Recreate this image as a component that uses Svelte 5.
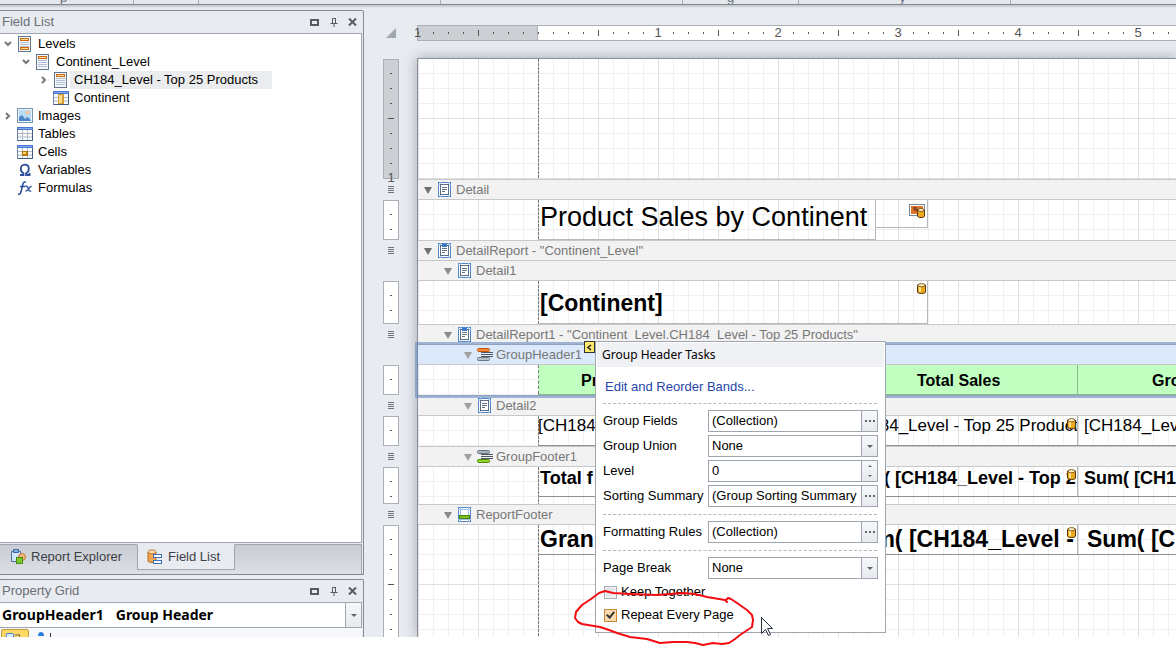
<script lang="ts">
  type TreeNode = {
    label: string;
    icon: string;
    depth: number;
    arrow?: 'open' | 'closed';
  };

  type Band = {
    id: string;
    title: string;
    icon: string;
    depth: number;
    height: number;
    marker: boolean;
  };

  const TREE_INDENT_PX = 18;
  const BAND_INDENT_PX = 20;

  const tree: TreeNode[] = [
    { label: 'Levels', icon: 'levels', depth: 0, arrow: 'open' },
    { label: 'Continent_Level', icon: 'level', depth: 1, arrow: 'open' },
    { label: 'CH184_Level - Top 25 Products', icon: 'level', depth: 2, arrow: 'closed' },
    { label: 'Continent', icon: 'column', depth: 2 },
    { label: 'Images', icon: 'image', depth: 0, arrow: 'closed' },
    { label: 'Tables', icon: 'table', depth: 0 },
    { label: 'Cells', icon: 'cell', depth: 0 },
    { label: 'Variables', icon: 'omega', depth: 0 },
    { label: 'Formulas', icon: 'fx', depth: 0 }
  ];

  // A height of 0 means the band has a caption only, -1 means it takes the rest.
  const bands: Band[] = [
    { id: 'detail', title: 'Detail', icon: 'band', depth: 0, height: 41, marker: true },
    { id: 'report', title: 'DetailReport - "Continent_Level"', icon: 'report', depth: 0, height: 0, marker: true },
    { id: 'detail1', title: 'Detail1', icon: 'band', depth: 1, height: 44, marker: false },
    { id: 'report1', title: 'DetailReport1 - "Continent_Level.CH184_Level - Top 25 Products"', icon: 'report', depth: 1, height: 0, marker: true },
    { id: 'header1', title: 'GroupHeader1', icon: 'groupheader', depth: 2, height: 31, marker: false },
    { id: 'detail2', title: 'Detail2', icon: 'band', depth: 2, height: 31, marker: true },
    { id: 'footer1', title: 'GroupFooter1', icon: 'groupfooter', depth: 2, height: 38, marker: true },
    { id: 'footer', title: 'ReportFooter', icon: 'footer', depth: 1, height: -1, marker: true }
  ];

  const rows: Record<string, string[]> = {
    header1: ['Pr', 'Total Sales', 'Gro'],
    detail2: ['[CH184_', '[CH184_Level - Top 25 Product', '[CH184_Lev'],
    footer1: ['Total f', 'Sum( [CH184_Level - Top 2', 'Sum( [CH1'],
    footer: ['Gran', 'Sum( [CH184_Level -', 'Sum( [C']
  };

  const inches = ['', '1', '2', '3', '4', '5'];

  let selectedNode = 'CH184_Level - Top 25 Products';
  let selectedBand = 'header1';
  let activeTab = 'Field List';
  let level = 0;
  let keepTogether = false;
  let repeatEveryPage = true;
</script>

{#snippet icon(name: string)}
  <svg class="icon" width="16" height="16" viewBox="0 0 16 16" fill="none" aria-hidden="true">
    {#if name === 'levels' || name === 'level'}
      <rect x="1.5" y=".5" width="12" height="15" fill="#f4f7fb" stroke="#64788f" />
      <rect x="3.5" y="2.5" width="8" height="2" fill="#ffe0a0" stroke="#d0690c" />
      <path d="M3 6.5h9M3 8.5h9M3 10.5h9" stroke="#b4bfd2" />
      {#if name === 'levels'}
        <rect x="3.5" y="11.5" width="8" height="2" fill="#ffe0a0" stroke="#d0690c" />
      {:else}
        <path d="M3 12.5h9" stroke="#b4bfd2" />
      {/if}
    {:else if name === 'table' || name === 'cell' || name === 'column'}
      <rect x=".5" y="1.5" width="15" height="13" fill="#fbfcfe" stroke="#6d83a8" />
      <path d="M0 1h16v3H0z" fill="#4876d4" />
      <path d="M1 2.5h14" stroke="#86a9ee" />
      <path d="M5.5 4v10M10.5 4v10M1 7.5h14M1 11h14" stroke="#adb8ca" />
      <path d="M.5 14.5h15V4" stroke="#445e82" />
      {#if name === 'cell'}
        <path d="M5 7h6v5H5z" fill="#b8770f" /><path d="M6 8h3v2H6z" fill="#ffd86b" />
      {:else if name === 'column'}
        <path d="M5 4h6v10H5z" fill="#d69b32" /><path d="M6 5h3v8H6z" fill="#f7dc92" />
      {/if}
    {:else if name === 'image'}
      <rect x=".5" y=".5" width="15" height="14" fill="#eaf3fc" stroke="#7b94b2" />
      <path d="M2 2h12v11H2z" fill="#b9dcf7" />
      <circle cx="10.5" cy="4.5" r="2" fill="#f7c79b" />
      <path d="M2 13V9l3-2 3 4 2-2 2 1 2 3z" fill="#4d86c5" />
    {:else if name === 'omega'}
      <path d="M3 13h3.5v-1.700C4.500 10.300 3.800 8.700 3.800 7c0-2.500 1.600-4.300 4-4.300s4 1.800 4 4.300c0 1.700-.7 3.300-2.700 4.300V13h3.500v-2" stroke="#2b4f9c" stroke-width="1.800" />
    {:else if name === 'fx'}
      <path d="M1 14c2 .7 2.700-.6 3.200-3L6 3.800C6.500 2 7.500 1.500 9 2.200M3 6.500h5.500" stroke="#2b4f9c" stroke-width="1.500" />
      <path d="M8.500 6.500c2-.8 2.300.5 2.700 2.200.5 2 1 3 3 2.200M14.700 6.500c-2.200-.6-3.300 4.800-6.200 4.500" stroke="#2b4f9c" stroke-width="1.300" />
    {:else if name === 'band' || name === 'report' || name === 'footer'}
      <rect x=".5" y=".5" width="12" height="14" fill="#fff" stroke="#5087c7" />
      <path d="M2.500 0v15M10.500 0v15M0 2.500h13" stroke="#9cbfe6" />
      {#if name === 'footer'}
        <path d="M0 12.500h13" stroke="#9cbfe6" />
        <rect x="1.500" y="8.500" width="10" height="3" fill="#7fbf22" stroke="#4a8a0a" />
      {:else}
        <rect x="2.500" y="2.500" width="8" height="10" fill="#fff" stroke="#5c6f85" />
        <path d="M4 5.500h5M4 7.500h5M4 9.500h3" stroke="#66727f" />
        {#if name === 'report'}
          <path d="M4 1h5v3H4z" fill="#3975c9" />
        {/if}
      {/if}
    {:else if name === 'groupheader' || name === 'groupfooter'}
      <path d="M3 5.500h12M3 7.500h12M3 9.500h12" stroke="#4d5864" />
      <rect x="-.5" y="1.500" width="12" height="3" rx="1" fill={name === 'groupheader' ? '#f08a35' : '#aab3bf'} stroke={name === 'groupheader' ? '#c4560c' : '#6b7683'} />
      <rect x="-.5" y="10.500" width="12" height="3" rx="1" fill={name === 'groupfooter' ? '#93cf25' : '#b8c0ca'} stroke={name === 'groupfooter' ? '#4a8a0a' : '#6b7683'} />
    {:else if name === 'explorer'}
      <path d="M1.500 2.500h9v10h-9z" fill="#d4e4f7" stroke="#4b6f9f" />
      <path d="M3.500.5h5v3h-5z" fill="#84b1e6" stroke="#41659a" />
      <circle cx="12" cy="8" r="3.500" fill="#f4b67a" stroke="#c57e3e" />
      <rect x="6.500" y="8.500" width="6" height="6" fill="#7cc52b" stroke="#478b10" />
    {:else if name === 'fields'}
      <path d="M1 3v9c0 2 8 2 8 0V3z" fill="#efa552" stroke="#b86b1f" />
      <ellipse cx="5" cy="2.800" rx="4" ry="1.800" fill="#fde4bd" stroke="#c57c31" />
      <rect x="6.500" y="5.500" width="8" height="3" fill="#fff" stroke="#3b70b8" />
      <rect x="6.500" y="11.500" width="8" height="3" fill="#fff" stroke="#3b70b8" />
    {/if}
  </svg>
{/snippet}

{#snippet cylinder()}
  <svg class="cylinder" width="9" height="11" viewBox="0 0 9 11" aria-hidden="true">
    <path d="M.5 2v7c0 2 8 2 8 0V2z" fill="#eda91e" stroke="#59370b" />
    <path d="M2 3h2v6H2z" fill="#ffe48c" />
    <ellipse cx="4.500" cy="2.200" rx="3.500" ry="1.600" fill="#fff4cf" stroke="#8a5c1d" />
  </svg>
{/snippet}

{#snippet panelHead(title: string)}
  <header class="panel-head">
    <h2>{title}</h2>
    <button type="button" aria-label="Maximize">
      <svg width="9" height="7" viewBox="0 0 9 7"><rect x="1" y="1" width="7" height="5" fill="none" stroke="#555b63" stroke-width="2" /></svg>
    </button>
    <button type="button" aria-label="Pin">
      <svg width="8" height="9" viewBox="0 0 8 9" fill="none" stroke="#555b63"><path d="M2.500 5V.5h3V5M5.500 0v5M.5 5.500h7M4 6v3" /></svg>
    </button>
    <button type="button" aria-label="Close">
      <svg width="9" height="8" viewBox="0 0 9 8"><path d="M1 .5l7 7M8 .5l-7 7" stroke="#555b63" stroke-width="2" /></svg>
    </button>
  </header>
{/snippet}

<div class="app">
  <div class="ribbon">
    <span class="group g1">p</span>
    <span class="group g2"></span>
    <span class="group g3"></span>
    <span class="group g3"></span>
    <span class="group g4">g</span>
    <span class="group g5">y</span>
  </div>

  <div class="workspace">
    <aside class="dock">
      <section class="panel field-panel">
        {@render panelHead('Field List')}
        <div class="tree">
          {#each tree as node (node.label)}
            <div class="node" style={`padding-left: ${node.depth * TREE_INDENT_PX}px`}>
              <span class="arrow">
                {#if node.arrow}
                  <svg width="8" height="8" viewBox="0 0 8 8" fill="none" stroke="#777" stroke-width="2">
                    <path d={node.arrow === 'open' ? 'M1 2l3 3 3-3' : 'M2 1l3 3-3 3'} />
                  </svg>
                {/if}
              </span>
              {@render icon(node.icon)}
              <button
                class="node-label"
                class:selected={node.label === selectedNode}
                type="button"
                on:click={() => (selectedNode = node.label)}
              >{node.label}</button>
            </div>
          {/each}
        </div>
        <nav class="tabs">
          <button type="button" class:active={activeTab === 'Report Explorer'} on:click={() => (activeTab = 'Report Explorer')}>
            {@render icon('explorer')}Report Explorer
          </button>
          <button type="button" class:active={activeTab === 'Field List'} on:click={() => (activeTab = 'Field List')}>
            {@render icon('fields')}Field List
          </button>
        </nav>
      </section>

      <section class="panel property-panel">
        {@render panelHead('Property Grid')}
        <button class="object-combo" type="button">
          <span>GroupHeader1</span>
          <span>Group Header</span>
          <i class="drop"><b></b></i>
        </button>
        <div class="property-tools">
          <button class="tool-on" type="button" aria-label="Categorized">
            <svg width="28" height="8" viewBox="0 0 28 8"><rect x="4.500" y="3.500" width="8" height="6" rx="1" fill="#dcebff" stroke="#3977c7" /><path d="M14 5h5v2" stroke="#555" fill="none" /></svg>
          </button>
          <svg width="24" height="8" viewBox="0 0 24 8"><path d="M6 7c0-4 4-4 4 0" fill="#2f7fe0" stroke="#2f7fe0" stroke-width="2" /><path d="M17.500 4v4" stroke="#333" /></svg>
        </div>
      </section>
    </aside>

    <main class="designer">
      <div class="top-ruler">
        <svg class="corner" width="11" height="11" viewBox="0 0 11 11"><path d="M10 0v10H0z" fill="#a0a8b1" /></svg>
        <div class="ruler-x">
          <div class="half"><span>1</span></div>
          {#each inches as inch}
            <div class="inch" class:origin={inch === ''}><span>{inch}</span></div>
          {/each}
        </div>
      </div>

      <div class="surface">
        <div class="ruler-y">
          <div class="scale margin"><span>1</span></div>
          {#each bands as band (band.id)}
            <div class="scale-gap">
              {#if band.marker}
                <svg width="6" height="8" viewBox="0 0 6 8"><path d="M0 .5h6M0 2.500h6M0 4.500h6M0 6.500h6" stroke="#70757c" /></svg>
              {/if}
            </div>
            {#if band.height > 0}
              <div class="scale" style={`height: ${band.height - 1}px`}></div>
            {:else if band.height < 0}
              <div class="scale rest"></div>
            {/if}
          {/each}
        </div>

        <div class="page">
          <div class="band-body margin-band"></div>
          {#each bands as band (band.id)}
            <section class="band" class:selected={band.id === selectedBand} class:grow={band.height < 0}>
              <div class="band-head" class:nested={band.depth > 0} style={`padding-left: ${band.depth * BAND_INDENT_PX}px`}>
                <span class="fold" class:light={band.depth > 1}></span>
                {@render icon(band.icon)}
                <span class="band-title">{band.title}</span>
              </div>
              {#if band.height !== 0}
                <div class="band-body" class:rest={band.height < 0} style={band.height > 0 ? `height: ${band.height}px` : undefined}>
                  {#if band.id === 'detail'}
                    <div class="box title-box">Product Sales by Continent</div>
                    <div class="box picture-box">
                      <svg width="17" height="15" viewBox="0 0 17 15">
                        <rect x=".5" y=".5" width="15" height="11" fill="#fff" stroke="#7d8794" />
                        <path d="M2 2h12v8H2z" fill="#e0752a" /><path d="M4 3h4v2h2v2H5z" fill="#8c4a23" />
                        <path d="M8.500 6v6c0 2 7 2 7 0V6z" fill="#eda91e" stroke="#59370b" />
                        <ellipse cx="12" cy="6" rx="3" ry="1.500" fill="#fff4cf" stroke="#8a5c1d" />
                      </svg>
                    </div>
                  {:else if band.id === 'detail1'}
                    <div class="box continent-box">[Continent]{@render cylinder()}</div>
                  {:else}
                    <div class={`cells ${band.id}`}>
                      {#each rows[band.id] as text, i}
                        <div class="cell">
                          {text}
                          {#if i === 1 && band.id !== 'header1'}
                            {@render cylinder()}
                          {/if}
                        </div>
                      {/each}
                    </div>
                  {/if}
                </div>
              {/if}
            </section>
          {/each}
        </div>
      </div>

      <button class="smart-tag" type="button" aria-label="Close tasks">
        <svg width="5" height="7" viewBox="0 0 5 7" fill="none" stroke="#222" stroke-width="1.500"><path d="M4 1L1 3.500 4 6" /></svg>
      </button>

      <form class="tasks" on:submit|preventDefault>
        <h3>Group Header Tasks</h3>
        <a href="#bands">Edit and Reorder Bands...</a>
        <hr />
        <div class="field">
          <label for="group-fields">Group Fields</label>
          <div class="editor">
            <input id="group-fields" type="text" value="(Collection)" />
            <button class="dots" type="button" aria-label="Edit group fields"><b></b><b></b><b></b></button>
          </div>
        </div>
        <div class="field">
          <label for="group-union">Group Union</label>
          <div class="editor">
            <select id="group-union"><option>None</option></select>
            <i class="drop"><b></b></i>
          </div>
        </div>
        <div class="field">
          <label for="level">Level</label>
          <div class="editor">
            <input id="level" type="text" bind:value={level} />
            <div class="spin">
              <button type="button" aria-label="Increase" on:click={() => (level += 1)}><b class="up"></b></button>
              <button type="button" aria-label="Decrease" on:click={() => (level = Math.max(0, level - 1))}><b></b></button>
            </div>
          </div>
        </div>
        <div class="field">
          <label for="sorting">Sorting Summary</label>
          <div class="editor">
            <input id="sorting" type="text" value="(Group Sorting Summary" />
            <button class="dots" type="button" aria-label="Edit sorting summary"><b></b><b></b><b></b></button>
          </div>
        </div>
        <hr />
        <div class="field">
          <label for="rules">Formatting Rules</label>
          <div class="editor">
            <input id="rules" type="text" value="(Collection)" />
            <button class="dots" type="button" aria-label="Edit formatting rules"><b></b><b></b><b></b></button>
          </div>
        </div>
        <hr />
        <div class="field">
          <label for="page-break">Page Break</label>
          <div class="editor">
            <select id="page-break"><option>None</option></select>
            <i class="drop"><b></b></i>
          </div>
        </div>
        <label class="check"><input type="checkbox" bind:checked={keepTogether} />Keep Together</label>
        <label class="check"><input type="checkbox" bind:checked={repeatEveryPage} />Repeat Every Page</label>

        <svg class="markup" width="204" height="60" viewBox="0 0 204 60" fill="none" aria-hidden="true">
          <path
            d="M156 16L154 14 136 11 124 8 112 7 86 9 59 8 42 7 34 5 28 7 20 13 11 19 5 26 4 32 7 36 11 38 29 41 38 44 46 47 59 51 76 53 89 57 102 56 116 56 124 57 132 59 142 57 151 58 158 57 164 53 169 49 181 41 182 34 181 29 176 24 166 17 160 13 157 12 155 14"
            stroke="#f30d12"
            stroke-width="2"
            stroke-linejoin="round"
            stroke-linecap="round"
          />
          <path d="M190.500 31.500v16l4-4 3 6 2-1-3-6h5z" fill="#fff" stroke="#222a3d" />
        </svg>
      </form>
    </main>
  </div>
</div>

<style>
  :global(body) {
    margin: 0;
    background: #fff;
  }

  .app {
    height: 100vh;
    box-sizing: border-box;
    padding-bottom: 9px;
    display: flex;
    flex-direction: column;
    position: relative;
    overflow: hidden;
    font: 13px/18px "Liberation Sans", Arial, sans-serif;
    color: #000;
  }

  button,
  input,
  select {
    font: inherit;
    color: inherit;
    margin: 0;
    padding: 0;
    border: 0;
    border-radius: 0;
    background: none;
    outline: 0;
  }

  h2,
  h3 {
    margin: 0;
    font-size: 13px;
    font-weight: 400;
  }

  .icon,
  .cylinder {
    flex: none;
    overflow: visible;
  }

  .ribbon {
    flex: 0 0 4px;
    display: flex;
    overflow: hidden;
    background: #e4e7eb;
    border-bottom: 1px solid #868b92;
  }

  .group {
    box-sizing: border-box;
    flex: none;
    height: 8px;
    margin-top: -4px;
    border-right: 1px solid #a5abb3;
    line-height: 4px;
    text-align: center;
    color: #68727e;
  }

  .g1 { width: 134px; padding-right: 6px; }
  .g2 { width: 65px; }
  .g3 { width: 242px; }
  .g4 { width: 116px; padding-right: 20px; }
  .g5 { width: 212px; padding-right: 4px; }

  .workspace {
    flex: 1;
    min-height: 0;
    display: flex;
    background: #e8ebf0;
    box-shadow: inset 0 3px 3px -2px #aeb4bb;
  }

  .dock {
    flex: 0 0 364px;
    box-sizing: border-box;
    display: flex;
    flex-direction: column;
    gap: 4px;
    padding-top: 5px;
  }

  .panel {
    box-sizing: border-box;
    display: flex;
    flex-direction: column;
    border: 1px solid #868b92;
    border-left: 0;
    border-top-right-radius: 2px;
    padding-right: 1px;
    overflow: hidden;
  }

  .field-panel {
    flex: 1;
    min-height: 0;
  }

  .property-panel {
    flex: 0 0 58px;
    border-bottom: 0;
  }

  .panel-head {
    flex: 0 0 22px;
    display: flex;
    align-items: center;
    padding: 0 0 0 2px;
    border-bottom: 1px solid #a0a6af;
    color: #6a6f77;
  }

  .panel-head h2 {
    flex: 1;
  }

  .panel-head button {
    width: 19px;
    height: 18px;
    display: flex;
    align-items: center;
    justify-content: center;
  }

  .tree {
    flex: 1;
    padding-top: 1px;
    background: #fff;
    border-right: 1px solid #a0a6af;
    border-bottom: 1px solid #a0a6af;
  }

  .node {
    display: flex;
    align-items: center;
    height: 18px;
  }

  .arrow {
    width: 17px;
    flex: none;
    display: flex;
    padding-left: 4px;
    box-sizing: border-box;
  }

  .node-label {
    margin-left: 1px;
    padding: 0 14px 0 4px;
    height: 18px;
  }

  .node-label.selected {
    background: #ebecee;
  }

  .tabs {
    flex: 0 0 30px;
    display: flex;
    align-items: flex-start;
    margin-top: 1px;
    border-right: 1px solid #a0a6af;
    background: linear-gradient(#c7cbd2, #dde0e6);
    box-shadow: inset 0 1px #a0a6af;
    color: #3c4046;
  }

  .tabs button {
    display: flex;
    align-items: center;
    gap: 5px;
    height: 26px;
    padding: 0 14px 0 9px;
    border: 1px solid transparent;
  }

  .tabs .active {
    background: #e8ebf0;
    border-color: #e8ebf0 #a0a6af #a0a6af;
  }

  .object-combo {
    flex: 0 0 25px;
    display: flex;
    align-items: center;
    gap: 12px;
    padding-left: 2px;
    background: #fff;
    border-right: 1px solid #a0a6af;
    border-bottom: 1px solid #a0a6af;
    font: bold 14px/24px "Noto Sans", "Open Sans", sans-serif;
  }

  .object-combo .drop {
    margin-left: auto;
  }

  .drop {
    flex: 0 0 15px;
    align-self: stretch;
    display: flex;
    align-items: center;
    justify-content: center;
    border-left: 1px solid #a0a6af;
    background: linear-gradient(#f7f8fa, #e6e9ed);
    pointer-events: none;
  }

  .drop b,
  .spin b {
    border: 3px solid transparent;
    border-top-color: #5f666f;
    border-bottom: 0;
  }

  .property-tools {
    flex: 1;
    display: flex;
    gap: 4px;
    padding: 1px 0 0 1px;
    background: #f7f8fb;
  }

  .tool-on {
    height: 12px;
    display: flex;
    border: 1px solid #c99a3a;
    border-radius: 2px;
    background: #ffd966;
    width: 28px;
    box-sizing: border-box;
  }

  .designer {
    flex: 1;
    min-width: 0;
    position: relative;
    display: flex;
    flex-direction: column;
    padding: 20px 0 0 19px;
  }

  .top-ruler {
    display: flex;
    align-items: center;
    gap: 21px;
    padding-left: 3px;
    margin-bottom: 17px;
  }

  .corner {
    flex: none;
  }

  .ruler-x {
    flex: 1;
    min-width: 0;
    display: flex;
    align-items: center;
    margin-left: -1px;
    height: 14px;
    border: 1px solid #abb0b6;
    border-right: 0;
    background:
      linear-gradient(90deg, #555 1px, transparent 1px) 60px 4px / 120px 6px repeat-x,
      linear-gradient(90deg, #555 1px, transparent 1px) 0 6px / 15px 2px repeat-x,
      linear-gradient(90deg, #ccd0d5 119px, #abb0b6 119px, #abb0b6 120px, #fff 120px);
    color: #555;
    line-height: 14px;
  }

  .half {
    flex: 0 0 60px;
  }

  .half span {
    margin-left: -4px;
  }

  .inch {
    flex: 0 0 120px;
    display: flex;
    justify-content: center;
  }

  .inch span {
    height: 14px;
    padding: 0 2px;
    background: #fff;
  }

  .inch.origin span {
    padding: 0;
  }

  .surface {
    flex: 1;
    min-height: 0;
    display: flex;
    gap: 18px;
    overflow: hidden;
    margin-top: -17px;
    padding-top: 17px;
  }

  .ruler-y {
    flex: 0 0 16px;
    display: flex;
    flex-direction: column;
    padding-top: 1px;
  }

  .scale {
    flex: none;
    box-sizing: border-box;
    border: 1px solid #abb0b6;
    background:
      linear-gradient(#555 1px, transparent 1px) 4px 58px / 6px 60px repeat-y,
      linear-gradient(#555 1px, transparent 1px) 6px 13px / 2px 15px repeat-y,
      #fff;
    background-clip: padding-box;
  }

  .scale.margin {
    height: 120px;
    background-color: #ccd0d5;
    color: #555;
    display: flex;
    align-items: flex-end;
    justify-content: center;
    line-height: 0;
  }

  .scale.rest {
    flex: 1;
    border-bottom: 0;
  }

  .scale-gap {
    flex: 0 0 21px;
    display: flex;
    align-items: center;
    justify-content: center;
  }

  /* Captions without a body have no ruler box under them. */
  .scale-gap + .scale-gap {
    flex-basis: 20px;
  }

  .page {
    flex: 1;
    min-width: 0;
    display: flex;
    flex-direction: column;
    border-left: 1px solid #8b929b;
    background: #fff;
    box-shadow: 0 0 12px rgba(50, 60, 75, 0.4);
  }

  .band {
    position: relative;
  }

  .band.grow {
    flex: 1;
    min-height: 0;
    display: flex;
    flex-direction: column;
  }

  .band-head {
    height: 18px;
    flex: none;
    display: flex;
    align-items: center;
    padding-top: 1px;
    border-top: 1px solid #c8c8c8;
    background: #f2f2f2;
    color: #777;
    white-space: nowrap;
  }

  .band.selected .band-head {
    background: #dce9fb;
  }

  .band.selected::after {
    content: '';
    position: absolute;
    inset: -2px 0 -3px -3px;
    border: 3px solid rgba(104, 139, 188, 0.6);
    border-right: 0;
    z-index: 1;
    pointer-events: none;
  }

  .fold {
    margin: 0 6px;
    border: 4px solid transparent;
    border-top: 7px solid #6f6f6f;
    border-bottom: 0;
  }

  .nested .fold {
    border-top-color: #8a8a8a;
  }

  .nested .fold.light {
    border-top-color: #a0a0a0;
  }

  .band-title {
    margin-left: 2px;
  }

  .band-body {
    box-sizing: border-box;
    display: flex;
    align-items: flex-start;
    padding-left: 120px;
    border-top: 1px solid #c8c8c8;
    overflow: hidden;
    background:
      repeating-linear-gradient(#777 0 3px, transparent 3px 4px) 120px 0 / 1px 100% no-repeat,
      linear-gradient(90deg, #e0e0e0 1px, transparent 1px) 0 0 / 60px 100%,
      linear-gradient(#e0e0e0 1px, transparent 1px) 0 -1px / 100% 60px,
      linear-gradient(90deg, #f0f0f0 1px, transparent 1px) 0 0 / 15px 100%,
      linear-gradient(#f0f0f0 1px, transparent 1px) 0 -1px / 100% 15px,
      #fff;
  }

  .band-body.rest {
    flex: 1;
  }

  .margin-band {
    height: 121px;
    border-top-color: #8b929b;
  }

  .box {
    position: relative;
    box-sizing: border-box;
    border: 1px solid #b8b8b8;
    border-top: 0;
    border-left-color: transparent;
  }

  .title-box {
    width: 338px;
    height: 40px;
    padding-left: 1px;
    font-size: 27px;
    line-height: 34px;
    white-space: nowrap;
  }

  .picture-box {
    width: 52px;
    height: 28px;
    border-left: 0;
    display: flex;
    justify-content: flex-end;
    padding: 4px 1px 0 0;
  }

  .continent-box {
    width: 390px;
    height: 43px;
    padding-left: 1px;
    font-size: 23px;
    font-weight: 700;
    line-height: 44px;
  }

  .cylinder {
    position: absolute;
    top: 2px;
    right: 1px;
  }

  .cells {
    flex: none;
    width: 100%;
    display: grid;
    grid-template-columns: 301px 239px 1fr;
    box-sizing: border-box;
    border-bottom: 1px solid #909090;
    white-space: nowrap;
    font-weight: 700;
  }

  .cell {
    position: relative;
    min-width: 0;
    overflow: hidden;
    padding-left: 6px;
    border-right: 1px solid #b8b8b8;
  }

  .cell:first-child {
    padding-left: 2px;
  }

  .cell:last-child {
    border-right: 0;
  }

  .header1 {
    background: #c0ffc0;
    border-color: #8fb58f;
    font-size: 16px;
    line-height: 31px;
    height: 30px;
  }

  .header1 .cell {
    border-color: #8fb58f;
    padding-left: 78px;
  }

  .header1 .cell:last-child {
    padding-left: 74px;
  }

  .header1 .cell:first-child {
    border-left: 1px dashed #777;
    padding-left: 42px;
  }

  .detail2 {
    font-size: 17px;
    font-weight: 400;
    line-height: 20px;
    height: 30px;
  }

  .detail2 .cell {
    padding-left: 2px;
  }

  .detail2 .cell:first-child {
    padding-left: 0;
  }

  .detail2 .cell:last-child {
    padding-left: 6px;
  }

  .footer1 {
    font-size: 18px;
    line-height: 22px;
    height: 30px;
  }

  .footer {
    font-size: 23px;
    line-height: 28px;
    height: 30px;
  }

  .footer .cell:last-child {
    padding-left: 9px;
  }

  .smart-tag {
    position: absolute;
    left: 220px;
    top: 336px;
    width: 11px;
    height: 12px;
    display: flex;
    align-items: center;
    justify-content: center;
    border: 1px solid #333;
    background: #ffe96b;
    z-index: 3;
  }

  .tasks {
    position: absolute;
    left: 231px;
    top: 336px;
    width: 291px;
    height: 292px;
    box-sizing: border-box;
    padding: 1px;
    border: 1px solid #a0a6af;
    background: #fff;
    z-index: 2;
  }

  .tasks h3 {
    padding-left: 5px;
    background: #f0f1f5;
    font: 12px/24px "Noto Sans", "Open Sans", sans-serif;
  }

  .tasks a {
    display: block;
    margin: 11px 0 7px 8px;
    color: #2646a8;
    text-decoration: none;
  }

  .tasks hr {
    margin: 7px 7px 6px 6px;
    border: 0;
    border-top: 1px dashed #b5bac2;
  }

  .field {
    display: flex;
    align-items: center;
    margin: 0 6px 3px;
  }

  .field label {
    flex: 0 0 105px;
    white-space: nowrap;
  }

  .editor {
    flex: 1;
    min-width: 0;
    display: flex;
    height: 20px;
    border: 1px solid #a0a6af;
    background: #fff;
  }

  .editor input,
  .editor select {
    flex: 1;
    min-width: 0;
    padding-left: 3px;
    appearance: none;
  }

  .dots {
    flex: 0 0 16px;
    display: flex;
    align-items: center;
    justify-content: center;
    gap: 2px;
    border-left: 1px solid #a0a6af;
    background: linear-gradient(#f7f8fa, #e6e9ed);
  }

  .dots b {
    width: 2px;
    height: 2px;
    background: #5f666f;
  }

  .spin {
    flex: 0 0 15px;
    display: flex;
    flex-direction: column;
    border-left: 1px solid #a0a6af;
    background: linear-gradient(#f7f8fa, #e6e9ed);
  }

  .spin button {
    flex: 1;
    display: flex;
    align-items: center;
    justify-content: center;
  }

  .spin b {
    border-width: 2px;
    border-bottom: 0;
  }

  .spin .up {
    border: 2px solid transparent;
    border-top: 0;
    border-bottom-color: #5f666f;
  }

  .check {
    display: flex;
    align-items: center;
    gap: 4px;
    margin: 4px 0 5px 7px;
  }

  .check input {
    appearance: none;
    width: 13px;
    height: 13px;
    box-sizing: border-box;
    border: 1px solid #a9adb3;
    background: linear-gradient(135deg, #d4d7db, #f6f6f6);
    box-shadow: inset 0 0 0 1px #f5f5f5;
  }

  .check input:checked {
    border-color: #c98a3a;
    background: #fbdcae;
    box-shadow: none;
  }

  .check input:checked::before {
    content: '';
    display: block;
    width: 3px;
    height: 6px;
    margin: 0 0 0 3px;
    border: solid #333;
    border-width: 0 2px 2px 0;
    rotate: 40deg;
  }

  .markup {
    position: absolute;
    left: -25px;
    bottom: -14px;
    pointer-events: none;
  }
</style>
